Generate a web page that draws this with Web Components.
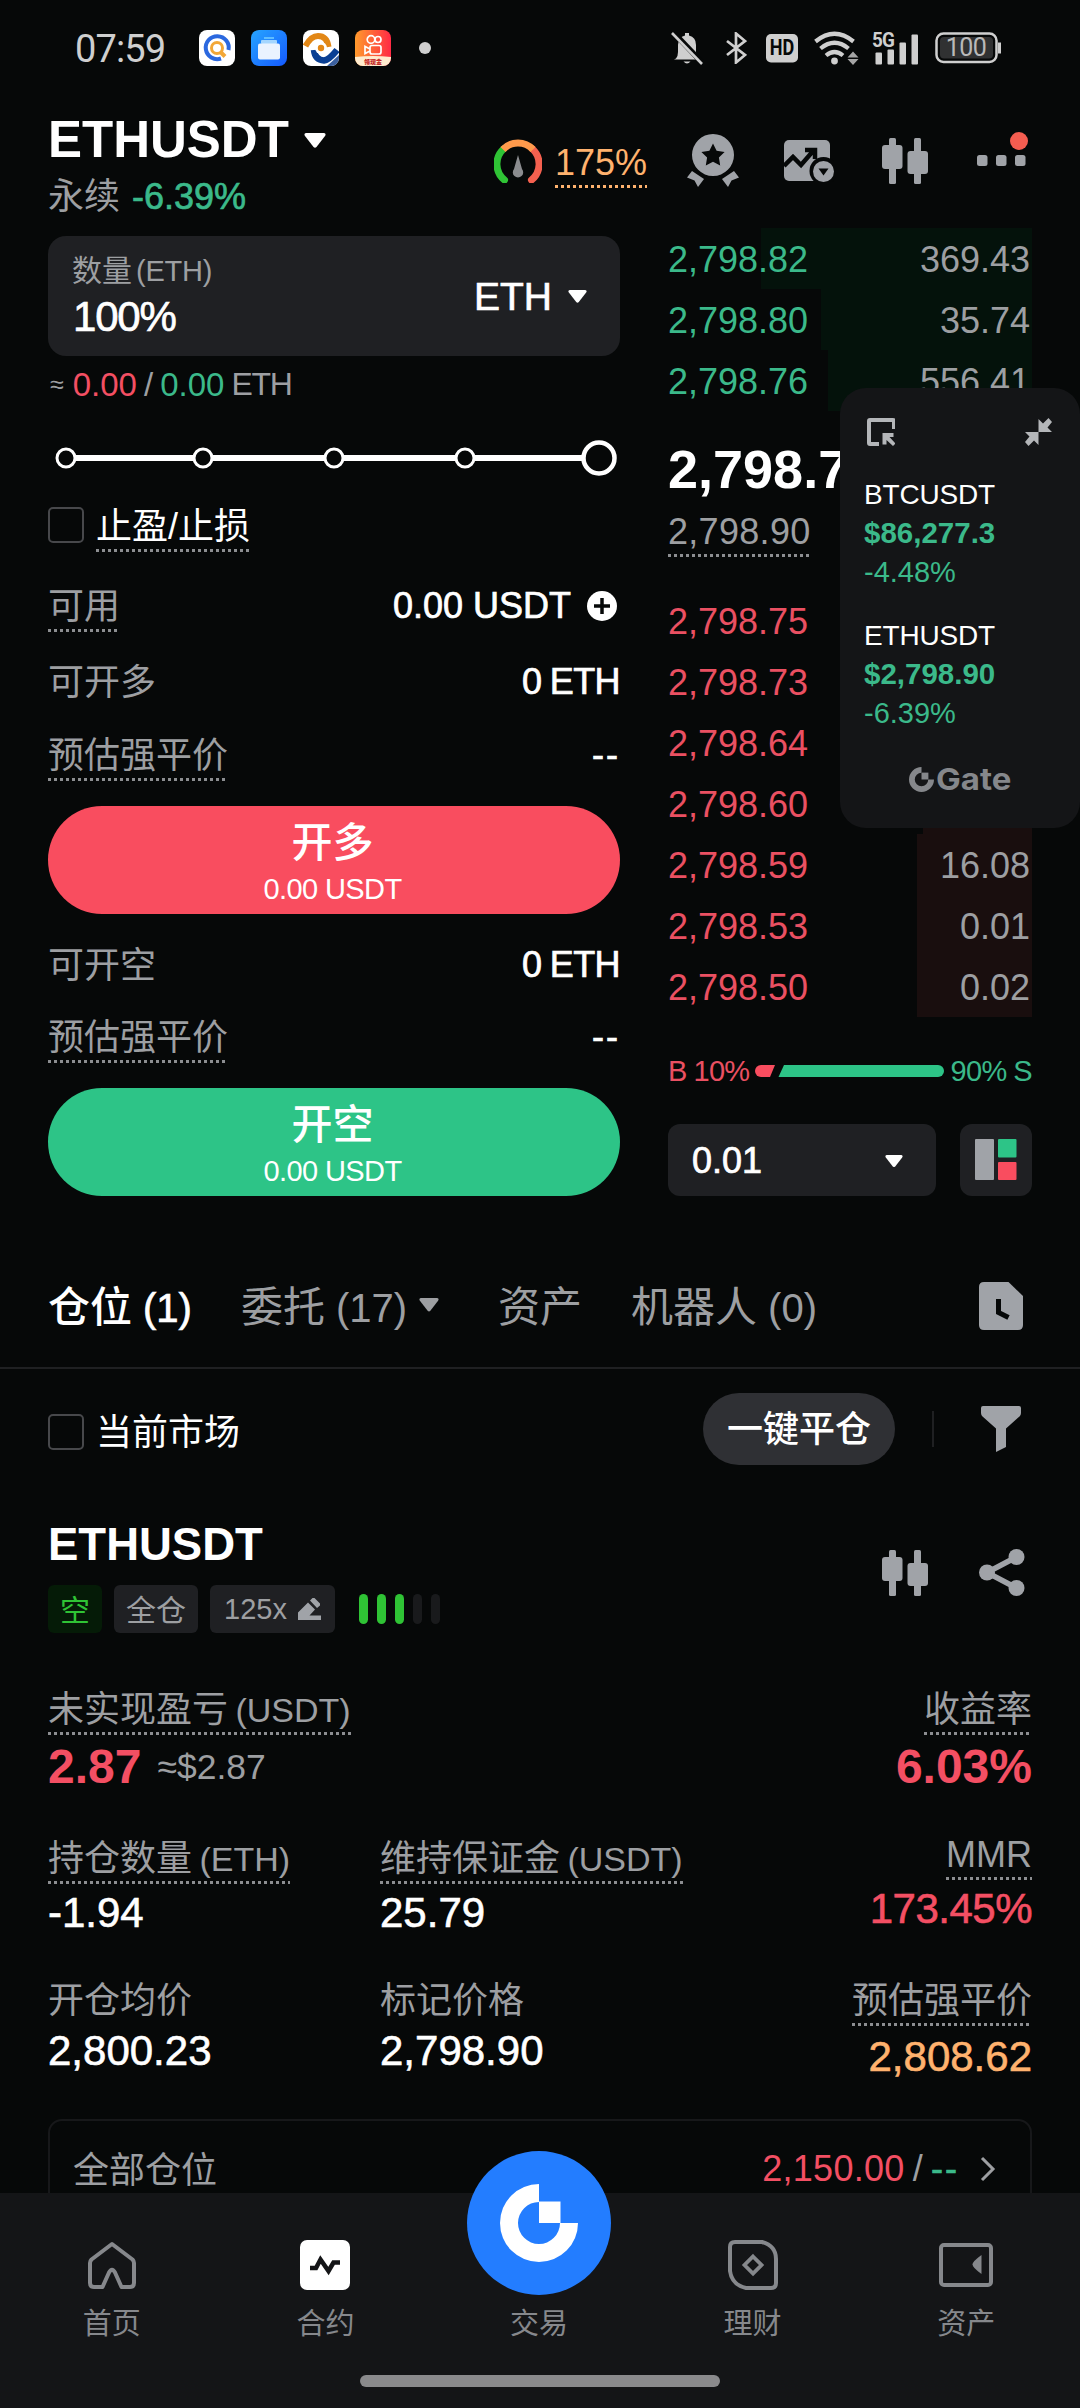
<!DOCTYPE html>
<html lang="zh-CN">
<head>
<meta charset="utf-8">
<title>ETHUSDT</title>
<style>
html,body{margin:0;padding:0;background:#060808}
body{width:1080px;height:2408px;overflow:hidden;font-family:"Liberation Sans","Noto Sans CJK SC",sans-serif;color:#fff}
</style>
</head>
<body>
<trade-app></trade-app>
<script>
const BASE = `
:host{display:block;box-sizing:border-box}
*{box-sizing:border-box}
.row{display:flex;align-items:center}
.sp{justify-content:space-between}
.g{color:#9d9fa2}.gr{color:#3bb98a}.rd{color:#f34f63}.or{color:#ffb26e}.w{color:#fff}
.m{-webkit-text-stroke:.7px currentColor}
span{white-space:nowrap}
`;
function define(name, html, css = '') {
  customElements.define(name, class extends HTMLElement {
    constructor() {
      super();
      const body = typeof html === 'function' ? html(this) : html;
      this.attachShadow({ mode: 'open' }).innerHTML = `<style>${BASE}${css}</style>${body}`;
    }
  });
}

const ICONS = {
  caret: [22, 15, '<path d="M2 0h18q2.500 .5 1 3L12.500 14q-1.500 1.500-3 0L1 3Q-.5 .5 2 0z" fill="currentColor"/>'],
  gauge: [48, 44, '<g fill="none" stroke-width="7"><path d="M10.500 41A20.500 20.500 0 0 1 9.500 10" stroke="#2fc335" stroke-linecap="round"/><path d="M37.500 41A20.500 20.500 0 0 0 38.500 10" stroke="#f4604f" stroke-linecap="round"/><path d="M9 10.500A20.500 20.500 0 0 1 39 10.500" stroke="#ff9a4c"/></g><path d="M24 16l4 14a5.200 5.200 0 1 1-8 0z" fill="#8b8c8f"/>'],
  medal: [52, 54, '<g fill="#a0a3a8"><path fill-rule="evenodd" d="M26 0a21 21 0 1 1 0 42a21 21 0 0 1 0-42zM26 9.500l-3.600 7.200-8 1.200 5.700 5.600-1.300 8 7.200-3.700 7.200 3.700-1.300-8 5.700-5.600-8-1.200z"/><path d="M5 37l12 8-6 8-3.500-6.500L0 43.500zM47 37l-12 8 6 8 3.500-6.500 7.500-3z"/></g>'],
  chart: [50, 42, '<rect y="0" width="46" height="41" rx="5" fill="#a0a3a8"/><path d="M0 26l9-9 8 8 13-15M21 10h10v9" fill="none" stroke="#060808" stroke-width="4.500"/><circle cx="39.500" cy="31" r="14" fill="#060808"/><circle cx="39.500" cy="31.500" r="10.500" fill="#a0a3a8"/><path d="M34.500 28.500h10l-5 7z" fill="#060808"/>'],
  candles: [46, 46, '<g fill="#a0a3a8"><rect x="7" width="7" height="46" rx="1.500"/><rect y="7" width="20.500" height="24" rx="3"/><rect x="32" width="7" height="46" rx="1.500"/><rect x="25.500" y="13" width="20.500" height="23" rx="3"/></g>'],
  more: [56, 36, '<g fill="#a0a3a8"><rect x="0" y="23" width="10.500" height="11" rx="2.500"/><rect x="19" y="23" width="10.500" height="11" rx="2.500"/><rect x="38" y="23" width="10.500" height="11" rx="2.500"/></g><circle cx="42" cy="9" r="9" fill="#f45d50"/>'],
  plus: [30, 30, '<circle cx="15" cy="15" r="15" fill="#fff"/><path d="M15 7v16M7 15h16" stroke="#060808" stroke-width="3.500"/>'],
  cursor: [28, 28, '<path d="M27 11V3Q27 2 26 2H3Q2 2 2 3V25Q2 26 3 26H12" fill="none" stroke="#b4b6b9" stroke-width="4"/><path d="M15.500 15h11v4h-4l6 6.500-2.500 2.500-6.500-6v4.500h-4z" fill="#b4b6b9"/>'],
  shrink: [27, 28, '<path d="M13.500 1v13H27l-4.500-4.500L27 4 23.500 0l-5.500 5.500zM13.500 27V14H0l4.500 4.500L0 24l3.500 4 5.500-5.500z" fill="#b4b6b9"/>'],
  gate: [78, 78, '<path fill="currentColor" d="M39 0A39 39 0 1 0 78 39H60A21 21 0 1 1 39 18z"/><path fill="currentColor" d="M39 17.500h21.500V39H39z"/>'],
  doc: [44, 48, '<path d="M5 0h24.500L44 14v29q0 5-5 5H5q-5 0-5-5V5q0-5 5-5z" fill="#a0a3a8"/><path d="M19.500 17v13.500l10 5" fill="none" stroke="#060808" stroke-width="5"/>'],
  filter: [40, 46, '<path d="M2 0h36q2 0 2 2v5q0 1.500-1 3L25 22.500V41l-10 5V22.500L1 10Q0 8.500 0 7V2q0-2 2-2z" fill="#a0a3a8"/>'],
  pencil: [23, 22, '<path d="M0 14.500L10 4.500l7 7-5.500 6H23V22H0zM12 2.500L14.500 0h2L22 5.500v2L19 10z" fill="#a0a3a8"/>'],
  share: [46, 47, '<path d="M37.500 8L8 23.500 37.500 39" fill="none" stroke="#a0a3a8" stroke-width="5.500"/><g fill="#a0a3a8"><circle cx="37.500" cy="8" r="8"/><circle cx="8" cy="23.500" r="8"/><circle cx="37.500" cy="39" r="8"/></g>'],
  split: [42, 42, '<rect width="19" height="41" rx="1" fill="#a0a3a8"/><rect x="23" width="18.500" height="18.500" rx="1" fill="#2dc487"/><rect x="23" y="23" width="18.500" height="18" rx="1" fill="#f94d5f"/>'],
  chevron: [16, 26, '<path d="M2 2l11 11L2 24" fill="none" stroke="#9d9fa2" stroke-width="3"/>'],
  home: [48, 48, '<path d="M24 3L3.500 18.500Q2 20 2 22V42Q2 46 6 46H14.500L21 31.500Q24 26 27 31.500L33.500 46H42Q46 46 46 42V22Q46 20 44.500 18.500z" fill="none" stroke="#86888c" stroke-width="4" stroke-linejoin="round"/>'],
  contract: [50, 50, '<rect width="50" height="50" rx="7" fill="#fff"/><path d="M10 28h6L20.500 19.500 28.500 31 33.500 22.500h6.500" fill="none" stroke="#141517" stroke-width="4.500"/>'],
  earn: [50, 50, '<path d="M7 2H34Q48 6 48 19V43Q48 48 43 48H18Q4 45 2 31V7Q2 2 7 2z" fill="none" stroke="#86888c" stroke-width="4"/><path d="M25 16.500l8.500 8.500L25 33.500 16.500 25z" fill="none" stroke="#86888c" stroke-width="3.800"/>'],
  wallet: [54, 44, '<rect x="2" y="2" width="50" height="40" rx="3" fill="none" stroke="#86888c" stroke-width="4"/><path d="M42.500 12v19q-9-6.500-9-9.500t9-9.500z" fill="#86888c"/>'],
  app1: [36, 36, '<rect width="36" height="36" rx="8" fill="#fff"/><path d="M22 28.500A11.500 11.500 0 1 1 29.500 20" fill="none" stroke="#2b68df" stroke-width="4"/><circle cx="18" cy="18" r="5.500" fill="none" stroke="#f2a737" stroke-width="3"/><path d="M21.500 22l4.500 4.500" stroke="#f2a737" stroke-width="4"/>'],
  app2: [36, 36, '<defs><linearGradient id="b" x2="1" y2="1"><stop stop-color="#27a5ff"/><stop offset="1" stop-color="#1459ff"/></linearGradient></defs><rect width="36" height="36" rx="8" fill="url(#b)"/><rect x="13" y="7" width="10" height="2" fill="#5fbdff"/><rect x="10" y="10" width="16" height="4" rx="1" fill="#a4d6ff"/><rect x="7" y="13.500" width="22" height="16" rx="2" fill="#eaf3ff"/>'],
  app3: [36, 36, '<defs><clipPath id="c"><rect width="36" height="36" rx="8"/></clipPath></defs><g clip-path="url(#c)"><rect width="36" height="36" fill="#fff"/><path d="M2.500 16Q8 6 15 6 24 6 25.500 17" fill="none" stroke="#e28716" stroke-width="6"/><path d="M11 20Q12 30 21 30.500 26 30 34 20" fill="none" stroke="#0a3f93" stroke-width="6.500"/><circle cx="18" cy="18" r="6" fill="#fff"/><circle cx="18" cy="18" r="3.200" fill="#e28716"/><path d="M36 25v11H24z" fill="#3a5f9e"/></g>'],
  app4: [36, 36, '<defs><linearGradient id="d" x2="1"><stop stop-color="#ff9a2c"/><stop offset="1" stop-color="#ff2a45"/></linearGradient><clipPath id="e"><rect width="36" height="36" rx="8"/></clipPath></defs><g clip-path="url(#e)"><rect width="36" height="36" fill="url(#d)"/><path d="M0 27q18-2 36 0v9H0z" fill="#ffeccf"/><g fill="none" stroke="#fff" stroke-width="1.700"><circle cx="16" cy="9.500" r="3.800"/><circle cx="23" cy="9.500" r="3"/><rect x="15" y="15.500" width="11" height="8.500" rx="2"/><path d="M15 19l-5-2.500v7l5-2.500"/></g></g><text x="9" y="34" font-size="6" font-weight="900" fill="#c31f1f" font-family="Noto Sans CJK SC">领现金</text>'],
  bell: [33, 33, '<path d="M5 26.500Q7 24 7 20V13Q7 5 14 3.500V1h4v2.500Q25 5 25 13v7q0 4 4 6.500v1H3zM12.500 29.500h7Q16 33.500 12.500 29.500z" fill="#cfcfcf"/><path d="M3 1l29 30.500" stroke="#060808" stroke-width="5.500"/><path d="M1 1l30 31" stroke="#cfcfcf" stroke-width="2.600"/>'],
  bt: [21, 32, '<path d="M1 9l18 14-9 7.500V1.500L19 9 1 23" fill="none" stroke="#cfcfcf" stroke-width="2.700"/>'],
  hd: [32, 29, '<rect width="32" height="28.500" rx="5" fill="#cfcfcf"/>'],
  wifi: [45, 34, '<g fill="none" stroke="#cfcfcf" stroke-width="4.200"><path d="M1.500 10.500Q20.500-5 39.500 10.500"/><path d="M6.500 17.500Q20.500 6 34.500 17.500"/><path d="M12 24.500Q20.500 17.500 29 24.500"/></g><circle cx="20.500" cy="30" r="3.400" fill="#cfcfcf"/><path d="M33.500 26.500h11l-5.500-6zM33.500 28h11l-5.500 6z" fill="#a5a5a5"/>'],
  bars: [46, 33, '<g fill="#cfcfcf"><rect x="3.500" y="20.500" width="6.500" height="12" rx="1"/><rect x="15.500" y="17.500" width="6.500" height="15" rx="1"/><rect x="27.500" y="10.500" width="6.500" height="22" rx="1"/><rect x="39.500" y="2.500" width="6.500" height="30" rx="1"/></g>'],
  batt: [67, 32, '<rect x="1.500" y="1.500" width="60" height="28.500" rx="7" fill="none" stroke="#cfcfcf" stroke-width="2.500"/><rect x="5" y="5" width="53" height="21.500" rx="4" fill="#303132"/><path d="M64.500 10.500v11" stroke="#cfcfcf" stroke-width="3"/>']
};
define('ui-icon', el => {
  const [w, h, body] = ICONS[el.getAttribute('name')];
  const tw = +el.getAttribute('w') || w, th = tw * h / w;
  return `<svg width="${tw}" height="${th}" viewBox="0 0 ${w} ${h}">${body}</svg>`;
}, ':host{display:block;flex:none}svg{display:block}');

define('dot-label', '<slot></slot>', `:host{display:block;width:max-content;white-space:nowrap;line-height:48px;margin-bottom:-3px;padding:2px 0 1px;color:var(--label,#9d9fa2);
background:repeating-linear-gradient(90deg,var(--dots,#8c8e91) 0 3px,transparent 3px 6px) left bottom/100% 3px no-repeat}`);

define('check-box', '', ':host{width:36px;height:36px;border:2.500px solid #47484b;border-radius:5px;flex:none}');

define('status-bar', `
<div class="row l"><span class="t">07:59</span>
<ui-icon name="app1"></ui-icon><ui-icon name="app2"></ui-icon><ui-icon name="app3"></ui-icon><ui-icon name="app4"></ui-icon><i></i></div>
<div class="row r"><ui-icon name="bell"></ui-icon><ui-icon name="bt" style="margin-left:22px"></ui-icon>
<div class="st" style="margin-left:19px"><ui-icon name="hd"></ui-icon><span class="hd">HD</span></div>
<ui-icon name="wifi" style="margin-left:16px"></ui-icon>
<div class="st" style="margin-left:13px;align-items:start;justify-items:start"><ui-icon name="bars"></ui-icon><span class="fg">5G</span></div>
<div class="st" style="margin-left:17px"><ui-icon name="batt"></ui-icon><span class="bt">100</span></div></div>`, `
:host{display:flex;justify-content:space-between;height:96px;padding:0 78px 0 75px;color:#cfcfcf}
.t{font:38px/40px Roboto;letter-spacing:-.9px;width:125px;margin-top:2px}
.l{gap:16px}.l .t{width:108px}
i{width:12px;height:12px;border-radius:6px;background:#cfcfcf;margin-left:12px}
.st{display:grid;place-items:center}.st>*{grid-area:1/1}
.hd{font:700 22px/28px Roboto;color:#060808;transform:scaleX(.82)}
.fg{font:700 21px/18px Roboto;letter-spacing:-1px;transform-origin:0 0;transform:scaleX(.9);margin-top:-1px}
.bt{font:25px/30px Roboto;letter-spacing:-.5px;margin-right:5px;color:#b9b9b9}`);

define('pair-header', `
<div><div class="row n"><b>ETHUSDT</b><ui-icon name="caret"></ui-icon></div>
<div class="row s"><span class="g">永续</span><span class="gr m">-6.39%</span></div></div>
<div class="row tools"><ui-icon name="gauge"></ui-icon><dot-label class="lev">175%</dot-label>
<ui-icon name="medal" style="margin-left:40px"></ui-icon><ui-icon name="chart" style="margin-left:45px"></ui-icon><ui-icon name="candles" style="margin-left:48px"></ui-icon><ui-icon name="more" style="margin-left:49px;margin-top:-22px"></ui-icon></div>`, `
:host{display:flex;justify-content:space-between;height:132px;padding:0 47px 0 48px}
.n{height:60px;margin-top:14px;gap:15px}
b{font-size:51px;line-height:60px}
.s{font-size:36px;line-height:48px;gap:12px;margin-top:3px}
.tools{height:60px;margin-top:35px}
.lev{--label:#ffb26e;--dots:#ffb26e;font-size:36px;margin-left:13px}`);

define('amount-box', `
<div><div class="a g">数量<span>(ETH)</span></div><div class="p m">100%</div></div>
<div class="row u"><span class="m">ETH</span><ui-icon name="caret" w="19"></ui-icon></div>`, `
:host{display:flex;justify-content:space-between;height:120px;background:#1f2023;border-radius:18px;padding:14px 33px 0 24px}
.a{font-size:30px;line-height:42px}.a span{margin-left:4px;letter-spacing:-.2px;font-size:29px}
.p{font-size:42px;line-height:48px;letter-spacing:-1.200px;margin:1px 0 0 1px}
.u{height:93px;font-size:39px;gap:16px}`);

define('pct-slider', `<svg width="572" height="40" viewBox="0 0 572 40"><path d="M18 20H551" stroke="#fff" stroke-width="6"/><g fill="#060808" stroke="#fff" stroke-width="3"><circle cx="18" cy="20" r="9"/><circle cx="155" cy="20" r="9"/><circle cx="286" cy="20" r="9"/><circle cx="417" cy="20" r="9"/><circle cx="551" cy="20" r="15.500" stroke-width="4.500"/></g></svg>`,
 ':host{height:89px;padding-top:26px}svg{display:block}');

define('info-row', '<slot name="k"></slot><span class="v m"><slot></slot></span>',
 ':host{display:flex;justify-content:space-between;align-items:center;height:48px;font-size:36px;line-height:48px;color:#9d9fa2}.v{color:#fff;display:flex;align-items:center;padding-top:2px}::slotted(span[slot=k]){padding-top:3px}');

define('side-button', '<div class="a"><slot></slot></div><div class="b">0.00 USDT</div>',
 ':host{height:108px;border-radius:54px;text-align:center;color:#fff;padding:11px 3px 0 0}.a{font-size:41px;line-height:52px;font-weight:500}.b{font-size:29px;line-height:36px;letter-spacing:-.6px;margin-top:2px}');

define('order-form', `
<amount-box></amount-box>
<div class="row ap"><span class="g" style="font-size:25px">≈</span><span class="rd" style="margin-left:9px">0.00</span><span class="g" style="margin-left:7px">/</span><span class="gr" style="margin-left:7px">0.00</span><span class="g e">ETH</span></div>
<pct-slider></pct-slider>
<div class="row ck"><check-box></check-box><dot-label style="--label:#fff">止盈/止损</dot-label></div>
<info-row style="margin-top:32px"><dot-label slot="k">可用</dot-label>0.00 USDT<ui-icon name="plus" style="margin:0 3px 0 16px"></ui-icon></info-row>
<info-row style="margin-top:28px"><span slot="k">可开多</span><span style="word-spacing:-1px;letter-spacing:-.6px">0&nbsp;ETH</span></info-row>
<info-row style="margin-top:25px"><dot-label slot="k">预估强平价</dot-label><span style="letter-spacing:2px">--</span></info-row>
<side-button style="margin-top:28px;background:#f94d5f">开多</side-button>
<info-row style="margin-top:26px"><span slot="k">可开空</span><span style="word-spacing:-1px;letter-spacing:-.6px">0&nbsp;ETH</span></info-row>
<info-row style="margin-top:24px"><dot-label slot="k">预估强平价</dot-label><span style="letter-spacing:2px">--</span></info-row>
<side-button style="margin-top:28px;background:#2dc487">开空</side-button>`, `
:host{width:572px;margin-top:8px}
.ap{height:57px;margin-bottom:-1px;font-size:33px;padding-left:2px}.e{font-size:32px;letter-spacing:-1.200px;margin-left:7px}
.ck{height:48px;gap:12px;font-size:36px}`);

define('book-row', el => `<span style="color:${el.getAttribute('c')}">${el.getAttribute('p')}</span><span class="g">${el.getAttribute('q')}</span>`,
 ':host{display:flex;justify-content:space-between;align-items:center;height:61px;font-size:36px;padding:3px 2px 0 0;background:linear-gradient(var(--d),var(--d)) right/var(--w,0) 100% no-repeat}');

const bid = (p, q, w) => `<book-row c="#3bb98a" p="${p}" q="${q}" style="--d:#04120b;--w:${w}px"></book-row>`;
const ask = (p, q, w) => `<book-row c="#ea5062" p="${p}" q="${q}" style="--d:#190e0e;--w:${w}px"></book-row>`;
define('order-book', `
${bid('2,798.82', '369.43', 271)}${bid('2,798.80', '35.74', 211)}${bid('2,798.76', '556.41', 204)}
<div class="mid"><b>2,798.7</b><dot-label style="letter-spacing:.3px">2,798.90</dot-label></div>
${ask('2,798.75', '', 0)}${ask('2,798.73', '', 0)}${ask('2,798.64', '', 0)}${ask('2,798.60', '', 109)}${ask('2,798.59', '16.08', 115)}${ask('2,798.53', '0.01', 115)}${ask('2,798.50', '0.02', 115)}
<div class="row ratio"><span style="color:#ea5062">B 10%</span><svg width="190" height="12" viewBox="0 0 190 12"><path d="M6 0H20L15 12H6A6 6 0 0 1 6 0z" fill="#f94d5f"/><path d="M29 0H183A6 6 0 0 1 183 12H23.500z" fill="#2dc487"/></svg><span class="gr">90% S</span></div>
<div class="row ctl"><div class="row sp sel"><span class="m">0.01</span><ui-icon name="caret" w="18"></ui-icon></div><div class="row box"><ui-icon name="split"></ui-icon></div></div>`, `
:host{width:364px;font-size:36px}
.mid{height:179px;padding-top:28px}b{display:block;font-size:54px;line-height:60px;margin-bottom:7px}
.ratio{height:40px;margin-top:34px;font-size:29px;letter-spacing:-.7px;word-spacing:-.5px;justify-content:space-between}
.ratio svg{flex:none}
.ctl{margin-top:33px;gap:24px}
.sel{width:268px;height:72px;background:#1f2023;border-radius:12px;padding:2px 33px 0 24px}
.box{width:72px;height:72px;background:#1f2023;border-radius:12px;justify-content:center}`);

define('float-quote', `
<div class="row sp h"><ui-icon name="cursor"></ui-icon><ui-icon name="shrink"></ui-icon></div>
<div class="n">BTCUSDT</div><div class="p gr">$86,277.3</div><div class="c gr">-4.48%</div>
<div class="n" style="margin-top:25px">ETHUSDT</div><div class="p gr">$2,798.90</div><div class="c gr">-6.39%</div>
<div class="row lg"><ui-icon name="gate" w="25"></ui-icon><span>Gate</span></div>`, `
:host{position:absolute;left:840px;top:388px;width:240px;height:440px;background:#141517;border-radius:26px;padding:30px 28px 0 24px}
.h{height:28px;padding-left:3px}
.n{font-size:28px;line-height:38px;margin-top:30px;letter-spacing:-.2px}
.p{font-size:29.500px;line-height:38px;font-weight:700}
.c{font-size:29px;line-height:40px}
.lg{color:#85878b;gap:2px;height:40px;margin:26px 0 0 45px}
.lg span{font:700 30px/40px Inter;transform:scaleX(1.100);transform-origin:0 50%}`);

define('tab-bar', `
<span class="w" style="font-weight:500">仓位<em class="m">(1)</em></span><span style="margin-left:49px">委托<em>(17)</em></span><ui-icon name="caret" w="20" style="margin:-1px 0 0 12px"></ui-icon>
<span style="margin-left:59px">资产</span><span style="margin-left:49px">机器人<em>(0)</em></span><ui-icon name="doc" style="margin-left:auto"></ui-icon>`, `
:host{display:flex;align-items:center;height:173px;padding:48px 57px 0 48px;font-size:42px;color:#9d9fa2;border-bottom:2px solid #1f2022}
span{margin-top:-5px}
em{font-style:normal;font-size:40px;margin-left:11px}`);

define('filter-bar', `<check-box></check-box><span class="c">当前市场</span><span class="b">一键平仓</span><i></i><ui-icon name="filter"></ui-icon>`, `
:host{display:flex;align-items:center;height:72px;margin:24px 59px 0 48px;font-size:36px}
check-box{margin-top:6px}.c{margin-left:12px}
.b{margin-left:auto;width:192px;height:72px;line-height:74px;border-radius:36px;background:#2f3034;text-align:center;font-weight:500}
i{width:2px;height:36px;background:#1f2022;margin:0 47px 0 37px}`);

define('data-cell', '<dot-label class="k"><slot name="k"></slot></dot-label><div class="v"><slot></slot></div>', `
:host{font-size:36px;white-space:nowrap}
:host([plain]) .k{background:none}
:host([end]){display:flex;flex-direction:column;align-items:flex-end}
.v{font-size:42px;line-height:56px;margin-top:4px;-webkit-text-stroke:.6px currentColor}`);

define('position-card', `
<div class="row sp"><div><b class="n">ETHUSDT</b>
<div class="row tags"><span class="t gn">空</span><span class="t">全仓</span><span class="t">125x<ui-icon name="pencil" style="margin-left:11px"></ui-icon></span>
<div class="row lv"><i></i><i></i><i></i><i class="o"></i><i class="o"></i></div></div></div>
<div class="row ic"><ui-icon name="candles"></ui-icon><ui-icon name="share"></ui-icon></div></div>
<div class="row sp pnl"><div><dot-label>未实现盈亏<em> (USDT)</em></dot-label><div class="row"><b class="rd big">2.87</b><span class="g ap">≈$2.87</span></div></div>
<div class="end"><dot-label>收益率</dot-label><b class="rd big">6.03%</b></div></div>
<div class="grid"><data-cell><span slot="k">持仓数量<em> (ETH)</em></span>-1.94</data-cell><data-cell><span slot="k">维持保证金<em> (USDT)</em></span>25.79</data-cell><data-cell end style="margin-top:-4px"><span slot="k">MMR</span><span class="rd" style="letter-spacing:-.5px">173.45%</span></data-cell></div>
<div class="grid" style="margin-top:34px"><data-cell plain><span slot="k">开仓均价</span><div class="up">2,800.23</div></data-cell><data-cell plain><span slot="k">标记价格</span><div class="up">2,798.90</div></data-cell><data-cell end><span slot="k">预估强平价</span><div class="or dn">2,808.62</div></data-cell></div>
<div class="all row sp"><span class="g">全部仓位</span><div class="row rt"><span class="rd">2,150.00</span><span class="g" style="margin-left:8px">/</span><span class="gr m" style="margin:0 21px 0 8px;letter-spacing:2px">--</span><ui-icon name="chevron"></ui-icon></div></div>`, `
:host{margin:50px 48px 0;font-size:36px}
.n{display:block;font-size:45.500px;line-height:60px}
.tags{margin-top:10px;gap:12px}
.t{height:48px;display:flex;align-items:center;background:#1f2023;border-radius:6px;padding:0 12px 2px;color:#9d9fa2;font-size:30px}
.t:nth-child(3){font-size:29px;padding:0 14px}
.gn{background:#051b07;color:#2fc335}
.lv{gap:9px;margin-left:12px}.lv i{width:9px;height:30px;border-radius:4.500px;background:#2fc335}.lv .o{background:#191a1c}
.ic{gap:51px;margin:-3px 7px 0 0}
.pnl{margin-top:51px;align-items:flex-start}
em{font-style:normal;font-size:34px;word-spacing:-2px}
.big{font-size:48px;line-height:60px}.ap{font-size:35.500px;margin-left:16px}
.pnl .row,.end .big{margin-top:5px}
.end{display:flex;flex-direction:column;align-items:flex-end}
.grid{display:grid;grid-template-columns:332px 1fr auto;margin-top:36px}
.up{margin-top:-7px}.dn{padding-top:2px;margin-bottom:-2px}
.all{height:110px;margin-top:36px;border:2px solid #17181a;border-radius:14px;padding:0 34px 14px 23px}
.rt{padding-top:4px;letter-spacing:.3px}`);

define('nav-item', el => `<div class="i"><ui-icon name="${el.getAttribute('icon')}"></ui-icon></div><span><slot></slot></span>`,
 ':host{flex:1;display:flex;flex-direction:column;align-items:center;color:#86888c;font-size:29px}.i{height:50px;display:flex;align-items:center;margin-top:47px}span{line-height:36px;margin-top:16px}:host([main]) .i{width:144px;height:144px;border-radius:72px;background:#237dff;color:#fff;justify-content:center;margin-top:-42px}:host([main]) span{margin-top:11px}');

define('nav-bar', `<div class="row x"><nav-item icon="home">首页</nav-item><nav-item icon="contract">合约</nav-item><nav-item main icon="gate">交易</nav-item><nav-item icon="earn">理财</nav-item><nav-item icon="wallet">资产</nav-item></div><i></i>`, `
:host{position:relative;height:215px;background:#141517;flex:none}
.x{padding:0 7px 0 5px;align-items:flex-start;height:182px}i{display:block;width:360px;height:12px;border-radius:6px;background:#8a8a8c;margin:0 auto}`);

define('trade-app', `
<main><status-bar></status-bar><pair-header></pair-header>
<div class="row top"><order-form></order-form><order-book></order-book></div>
<tab-bar></tab-bar><filter-bar></filter-bar><position-card></position-card></main>
<nav-bar></nav-bar><float-quote></float-quote>`, `
:host{position:relative;display:flex;flex-direction:column;width:1080px;height:2408px;background:#060808}
main{height:2193px;overflow:hidden;flex:none}
.top{align-items:flex-start;justify-content:space-between;padding:0 48px;height:968px}`);
</script>
</body>
</html>
